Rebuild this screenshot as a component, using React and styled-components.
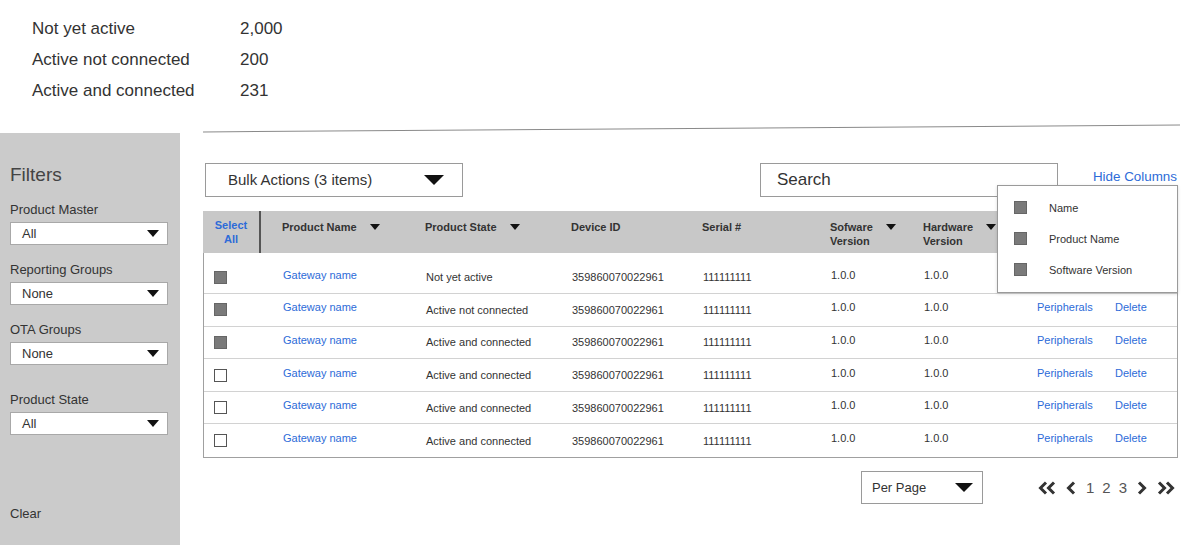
import React from "react";
import styled, { createGlobalStyle } from "styled-components";

const GlobalStyle = createGlobalStyle`
    body {
        margin: 0;
        background: #ffffff;
        font-family: "Liberation Sans", Arial, sans-serif;
        color: #333333;
    }
`;

const Page = styled.div`
    width: 1200px;
    height: 550px;
    overflow: hidden;
`;

const Stats = styled.div`
    padding: 13px 0 0 32px;
`;

const StatRow = styled.div`
    display: grid;
    grid-template-columns: 208px auto;
    font-size: 17px;
    line-height: 31px;
    color: #333;
`;

const Divider = styled.div`
    margin: 22px 20px 4px 203px;
    height: 0;
    border-top: 1.5px solid #8a8a8a;
    transform: rotate(-0.4deg);
`;

const Body = styled.div`
    display: flex;
    height: 412px;
`;

const Sidebar = styled.aside`
    width: 180px;
    flex-shrink: 0;
    background: #cbcbcb;
    padding: 31px 0 23px 10px;
    box-sizing: border-box;
    display: flex;
    flex-direction: column;
`;

const SidebarTitle = styled.div`
    font-size: 19px;
    line-height: 22px;
    color: #444;
    margin-bottom: 16px;
`;

const FilterGroup = styled.div`
    margin-bottom: ${({ $space }) => $space}px;
`;

const FilterLabel = styled.div`
    font-size: 13px;
    line-height: 16px;
    color: #333;
    margin-bottom: 4px;
`;

const Select = styled.div`
    width: 158px;
    height: 23px;
    box-sizing: border-box;
    background: #fff;
    border: 1px solid #a8a8a8;
    display: flex;
    align-items: center;
    justify-content: space-between;
    padding: 0 8px 0 11px;
    font-size: 13px;
    color: #333;
`;

const ClearLink = styled.div`
    margin-top: auto;
    font-size: 13px;
    line-height: 16px;
    color: #333;
`;

const Triangle = styled.span`
    display: inline-block;
    width: 0;
    height: 0;
    border-left: ${({ $w }) => $w / 2}px solid transparent;
    border-right: ${({ $w }) => $w / 2}px solid transparent;
    border-top: ${({ $h }) => $h}px solid #111;
    flex-shrink: 0;
`;

const Main = styled.main`
    flex: 1;
    padding: 29.5px 22px 0 23px;
    display: flex;
    flex-direction: column;
`;

const Toolbar = styled.div`
    display: flex;
    align-items: flex-start;
    height: 34px;
`;

const BulkBox = styled.div`
    margin-left: 2px;
    width: 258px;
    height: 34px;
    box-sizing: border-box;
    border: 1px solid #9a9a9a;
    display: flex;
    align-items: center;
    justify-content: space-between;
    padding: 0 18px 0 22px;
    font-size: 15px;
    color: #333;
`;

const SearchBox = styled.div`
    margin-left: auto;
    width: 298px;
    height: 34px;
    box-sizing: border-box;
    border: 1px solid #9a9a9a;
    display: flex;
    align-items: center;
    padding-left: 16px;
    font-size: 17px;
    color: #333;
`;

const HideWrap = styled.div`
    position: relative;
    margin-left: 35px;
    padding: 6px 1px 0 0;
    font-size: 13.4px;
    line-height: 16px;
    color: #2d6bd8;
`;

const Popup = styled.div`
    position: absolute;
    top: 22px;
    right: 0;
    width: 181px;
    height: 108px;
    box-sizing: border-box;
    background: #fff;
    border: 1px solid #9a9a9a;
    box-shadow: 0 1px 3px rgba(0, 0, 0, 0.15);
    padding: 14px 0 0 16px;
    display: flex;
    flex-direction: column;
    gap: 15px;
    z-index: 5;
`;

const PopupItem = styled.div`
    display: flex;
    align-items: center;
    gap: 22px;
    height: 16px;
    font-size: 11px;
    color: #333;
`;

const Check = styled.span`
    display: inline-block;
    width: 13px;
    height: 13px;
    box-sizing: border-box;
    background: ${({ $checked }) => ($checked ? "#7a7a7a" : "#fff")};
    border: 1.5px solid ${({ $checked }) => ($checked ? "#666" : "#555")};
    flex-shrink: 0;
`;

const Table = styled.div`
    margin-top: 14px;
    border: 1px solid #a0a0a0;
    border-top: none;
`;

const columns = "58px 143px 146px 131px 128px 93px 113px 78px 1fr";

const HeadRow = styled.div`
    display: grid;
    grid-template-columns: ${columns};
    height: 42px;
    margin: 0 -1px;
    background: #c8c8c8;
`;

const SelectAll = styled.div`
    border-right: 2px solid #555;
    padding-top: 7px;
    text-align: center;
    font-size: 11px;
    line-height: 14px;
    font-weight: bold;
    color: #2d6bd8;
`;

const HeadCell = styled.div`
    display: flex;
    align-items: flex-start;
    gap: 13px;
    padding: 9px 0 0 21px;
    font-size: 11px;
    line-height: 14px;
    font-weight: bold;
    color: #333;

    ${Triangle} {
        margin-top: 4px;
    }
`;

const Rows = styled.div`
    padding-top: 9px;
`;

const Row = styled.div`
    display: grid;
    grid-template-columns: ${columns};
    height: 32.6px;
    box-sizing: border-box;
    border-bottom: 1px solid #d2d2d2;

    &:last-child {
        border-bottom: none;
    }
`;

const Cell = styled.div`
    display: flex;
    align-items: center;
    padding-left: ${({ $pad }) => ($pad != null ? $pad : 21)}px;
    padding-bottom: ${({ $raise }) => ($raise ? 5 : 0)}px;
    font-size: 11px;
    color: ${({ $link }) => ($link ? "#2d6bd8" : "#333")};
`;

const Footer = styled.div`
    margin-top: 13px;
    display: flex;
    justify-content: flex-end;
    align-items: center;
    padding-right: 3px;
`;

const PerPage = styled.div`
    width: 122px;
    height: 33px;
    box-sizing: border-box;
    border: 1px solid #9a9a9a;
    display: flex;
    align-items: center;
    justify-content: space-between;
    padding: 0 9px 0 10px;
    font-size: 13px;
    color: #333;
`;

const Pager = styled.div`
    margin-left: 55px;
    display: flex;
    align-items: center;
    gap: 10px;
    font-size: 15px;
    color: #555;
`;

const PageNumbers = styled.div`
    display: flex;
    gap: 8px;
`;

const Chevron = ({ double, flip }) => (
    <svg
        width={double ? 18 : 10}
        height="14"
        viewBox={double ? "0 0 18 14" : "0 0 10 14"}
        style={{ transform: flip ? "scaleX(-1)" : undefined }}
    >
        <polyline
            points="8,1.5 2.5,7 8,12.5"
            fill="none"
            stroke="#333"
            strokeWidth="3"
        />
        {double && (
            <polyline
                points="16,1.5 10.5,7 16,12.5"
                fill="none"
                stroke="#333"
                strokeWidth="3"
            />
        )}
    </svg>
);

const stats = [
    ["Not yet active", "2,000"],
    ["Active not connected", "200"],
    ["Active and connected", "231"],
];

const filters = [
    { label: "Product Master", value: "All", space: 17 },
    { label: "Reporting Groups", value: "None", space: 17 },
    { label: "OTA Groups", value: "None", space: 27 },
    { label: "Product State", value: "All", space: 0 },
];

// first row's actions sit under the Hide Columns menu
const devices = [
    { checked: true, state: "Not yet active", covered: true },
    { checked: true, state: "Active not connected" },
    { checked: true, state: "Active and connected" },
    { checked: false, state: "Active and connected" },
    { checked: false, state: "Active and connected" },
    { checked: false, state: "Active and connected" },
];

const App = () => {
    return (
        <Page>
            <GlobalStyle />
            <Stats>
                {stats.map(([label, value]) => (
                    <StatRow key={label}>
                        <span>{label}</span>
                        <span>{value}</span>
                    </StatRow>
                ))}
            </Stats>
            <Divider />
            <Body>
                <Sidebar>
                    <SidebarTitle>Filters</SidebarTitle>
                    {filters.map((f) => (
                        <FilterGroup key={f.label} $space={f.space}>
                            <FilterLabel>{f.label}</FilterLabel>
                            <Select>
                                {f.value}
                                <Triangle $w={13} $h={7} />
                            </Select>
                        </FilterGroup>
                    ))}
                    <ClearLink>Clear</ClearLink>
                </Sidebar>
                <Main>
                    <Toolbar>
                        <BulkBox>
                            Bulk Actions (3 items)
                            <Triangle $w={20} $h={10} />
                        </BulkBox>
                        <SearchBox>Search</SearchBox>
                        <HideWrap>
                            Hide Columns
                            <Popup>
                                {["Name", "Product Name", "Software Version"].map(
                                    (name) => (
                                        <PopupItem key={name}>
                                            <Check $checked />
                                            {name}
                                        </PopupItem>
                                    ),
                                )}
                            </Popup>
                        </HideWrap>
                    </Toolbar>
                    <Table>
                        <HeadRow>
                            <SelectAll>
                                Select
                                <br />
                                All
                            </SelectAll>
                            <HeadCell>
                                Product Name
                                <Triangle $w={11} $h={6} />
                            </HeadCell>
                            <HeadCell>
                                Product State
                                <Triangle $w={11} $h={6} />
                            </HeadCell>
                            <HeadCell>Device ID</HeadCell>
                            <HeadCell>Serial #</HeadCell>
                            <HeadCell>
                                <span>
                                    Sofware
                                    <br />
                                    Version
                                </span>
                                <Triangle $w={11} $h={6} />
                            </HeadCell>
                            <HeadCell>
                                <span>
                                    Hardware
                                    <br />
                                    Version
                                </span>
                                <Triangle $w={11} $h={6} />
                            </HeadCell>
                            <HeadCell />
                            <HeadCell />
                        </HeadRow>
                        <Rows>
                            {devices.map((d, i) => (
                                <Row key={i}>
                                    <Cell $pad={10}>
                                        <Check $checked={d.checked} />
                                    </Cell>
                                    <Cell $link $raise>
                                        Gateway name
                                    </Cell>
                                    <Cell>{d.state}</Cell>
                                    <Cell>359860070022961</Cell>
                                    <Cell>111111111</Cell>
                                    <Cell $raise>1.0.0</Cell>
                                    <Cell $raise>1.0.0</Cell>
                                    <Cell $link $raise>
                                        {!d.covered && "Peripherals"}
                                    </Cell>
                                    <Cell $link $raise>
                                        {!d.covered && "Delete"}
                                    </Cell>
                                </Row>
                            ))}
                        </Rows>
                    </Table>
                    <Footer>
                        <PerPage>
                            Per Page
                            <Triangle $w={18} $h={9} />
                        </PerPage>
                        <Pager>
                            <Chevron double />
                            <Chevron />
                            <PageNumbers>
                                <span>1</span>
                                <span>2</span>
                                <span>3</span>
                            </PageNumbers>
                            <Chevron flip />
                            <Chevron double flip />
                        </Pager>
                    </Footer>
                </Main>
            </Body>
        </Page>
    );
};

export default App;
